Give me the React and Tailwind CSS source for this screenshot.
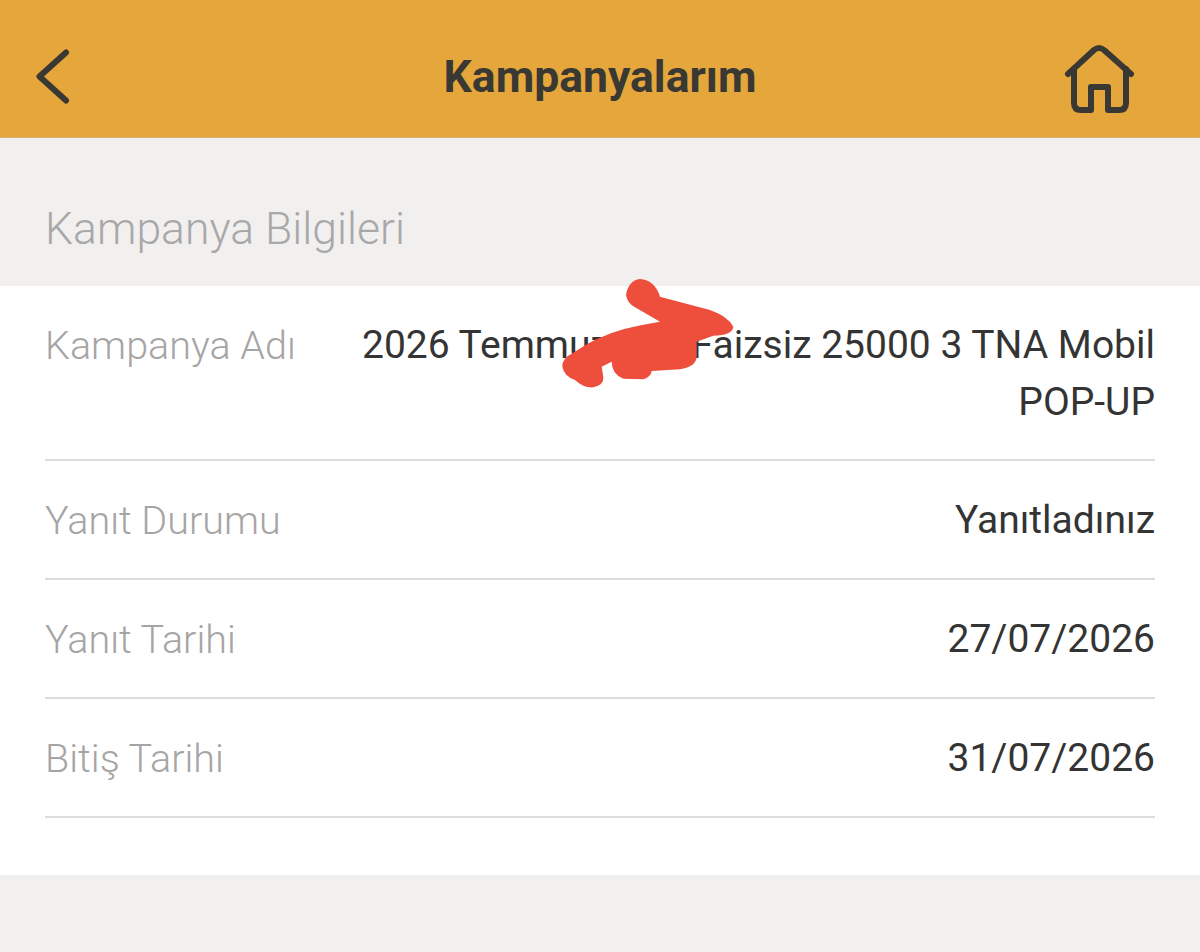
const font = { fontFamily: "Roboto, sans-serif" };

function Row({ label, children }) {
  return (
    <div className="flex justify-between border-b-2 border-[#dcdcdb] pb-[29px] pt-[31px] text-[39px] leading-[57px] first:pb-[28px]">
      <span className="shrink-0 text-[39.5px] font-light text-[#a6a5a5]">{label}</span>
      <span className="text-right text-[#343434]">{children}</span>
    </div>
  );
}

export default function App() {
  return (
    <div className="min-h-[952px] bg-[#f1f0ef]" style={font}>
      <header className="grid h-[138px] grid-cols-[1fr_auto_1fr] items-center border-b border-[#d8b26c] bg-[#e5a63b] px-[35px] pt-4">
        <svg className="justify-self-start" width="36" height="56" viewBox="0 0 36 56" fill="none" stroke="#3a3833" strokeWidth="6" strokeLinecap="round" strokeLinejoin="round">
          <path d="M31 3.5 L4.5 27.5 L31 51.5" />
        </svg>
        <h1 className="mt-[2px] text-[44.5px] font-bold text-[#3a3833]">Kampanyalarım</h1>
        <svg className="mr-[30px] justify-self-end" width="72" height="72" viewBox="0 0 72 72" fill="none" stroke="#3a3833" strokeWidth="6" strokeLinecap="round" strokeLinejoin="round">
          <path d="M5 33 L31 9 Q36 5 41 9 L68 33" />
          <path d="M11 28 V62 Q11 69 18 69 H28 V46 H45 V69 H56 Q63 69 63 62 V28" />
        </svg>
      </header>

      <h2 className="px-[45px] pb-[29px] pt-[63px] text-[44.5px] font-light leading-[56px] text-[#a9a8a8]">Kampanya Bilgileri</h2>

      <section className="relative bg-white px-[45px] pb-[57px]">
        <Row label="Kampanya Adı">
          2026 Temmuz <span className="inline-block w-[72px]" />Faizsiz 25000 3 TNA Mobil
          <br />
          POP-UP
        </Row>
        <Row label="Yanıt Durumu">Yanıtladınız</Row>
        <Row label="Yanıt Tarihi">27/07/2026</Row>
        <Row label="Bitiş Tarihi">31/07/2026</Row>

        {/* üstüne çizilmiş kırmızı karalama */}
        <svg className="absolute left-[540px] top-[-16px]" width="220" height="130" viewBox="0 0 660 390" fill="#ee4f3c">
          <path d="M300 27 Q265 32 258 75 Q262 100 285 112 L360 155 Q300 165 250 178 Q170 200 100 248 Q65 265 67 290 Q72 318 105 330 Q130 354 160 352 Q192 345 190 322 L185 290 L215 275 Q215 312 250 326 L310 328 Q332 322 335 303 L420 298 Q468 290 470 262 L470 215 L520 197 Q578 195 580 170 Q565 140 510 120 L360 80 Q345 30 300 27 Z" />
        </svg>
      </section>
    </div>
  );
}
